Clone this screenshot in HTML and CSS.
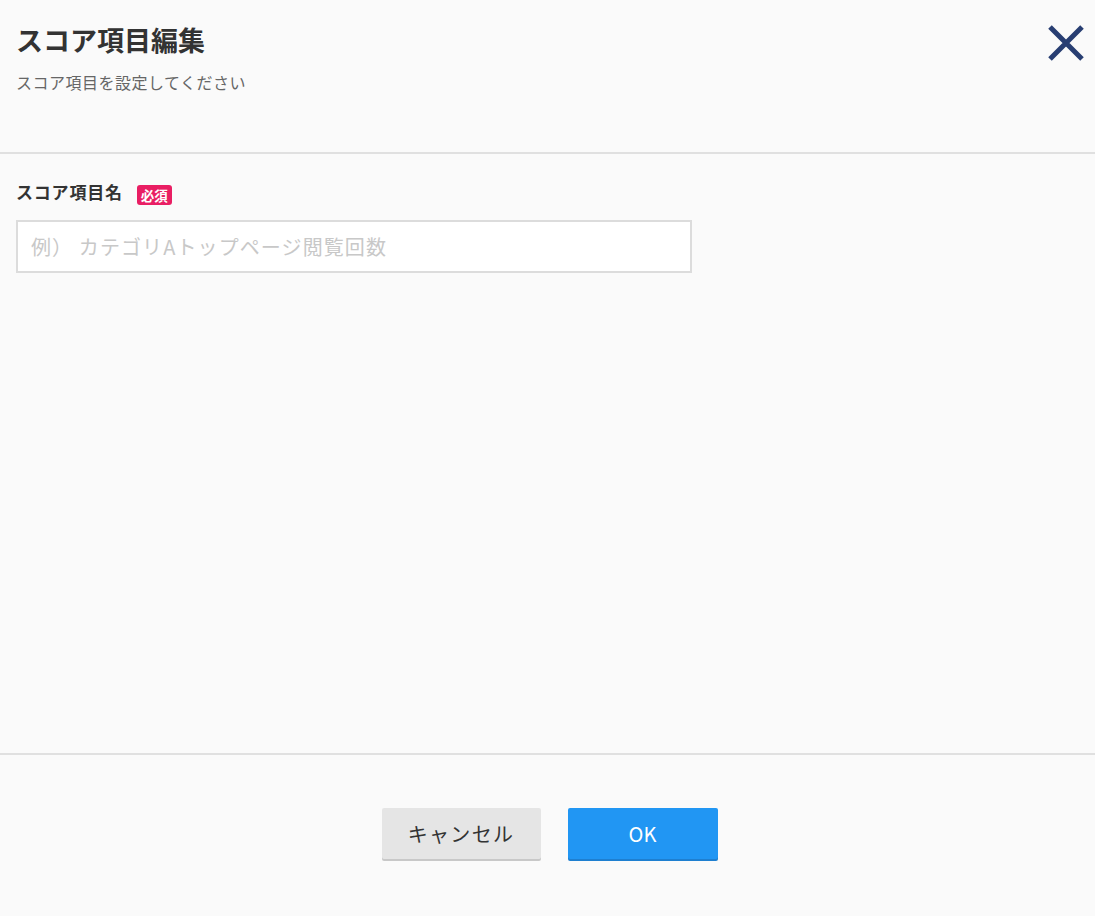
FILE: index.html
```html
<!DOCTYPE html>
<html lang="ja">
<head>
<meta charset="utf-8">
<title>スコア項目編集</title>
<link rel="stylesheet" href="styles.css">
</head>
<body>
<div class="dialog">
  <header class="dialog-header">
    <h1 class="dialog-title">スコア項目編集</h1>
    <p class="dialog-subtitle">スコア項目を設定してください</p>
    <button class="close-btn" aria-label="閉じる">
      <svg width="36" height="36" viewBox="0 0 36 36">
        <path d="M2 2 L34 34 M34 2 L2 34" stroke="#283e72" stroke-width="5" fill="none"/>
      </svg>
    </button>
  </header>
  <main class="dialog-body">
    <div class="field-label">
      <span class="label-text">スコア項目名</span>
      <span class="badge">必須</span>
    </div>
    <input class="text-input" type="text" placeholder="例） カテゴリAトップページ閲覧回数">
  </main>
  <footer class="dialog-footer">
    <button class="btn btn-cancel">キャンセル</button>
    <button class="btn btn-ok">OK</button>
  </footer>
</div>
</body>
</html>
```
FILE: styles.css
```css
* { box-sizing: border-box; }
html, body {
  margin: 0;
  padding: 0;
  background: #fafafa;
  font-family: "Noto Sans CJK JP", "Noto Sans", sans-serif;
  color: #333;
}
.dialog {
  height: 916px;
  display: flex;
  flex-direction: column;
}
.dialog-header {
  position: relative;
  padding: 22px 16px 0;
  height: 154px;
  flex: none;
  border-bottom: 2px solid #e0e0e0;
}
.dialog-title {
  margin: 0;
  font-size: 27px;
  line-height: 36px;
  font-weight: 700;
  color: #333;
}
.dialog-subtitle {
  margin: 12px 0 0;
  font-size: 16px;
  letter-spacing: 0.5px;
  line-height: 24px;
  color: #666;
}
.close-btn {
  position: absolute;
  top: 25px;
  right: 11px;
  padding: 0;
  border: 0;
  background: transparent;
  width: 36px;
  height: 36px;
  cursor: pointer;
}
.close-btn svg { display: block; }
.dialog-body {
  flex: 1;
  padding: 26px 16px 0;
  border-bottom: 2px solid #e0e0e0;
}
.field-label {
  display: flex;
  align-items: center;
  gap: 14px;
  height: 24px;
}
.label-text {
  font-size: 17px;
  letter-spacing: 0.8px;
  line-height: 24px;
  font-weight: 700;
  color: #333;
}
.badge {
  display: inline-block;
  background: #e91e63;
  color: #fff;
  font-size: 13.5px;
  font-weight: 700;
  line-height: 20px;
  height: 20px;
  padding: 0 4px;
  border-radius: 3px;
  margin-top: 5px;
}
.text-input {
  display: block;
  margin-top: 16px;
  width: 676px;
  height: 53px;
  border: 2px solid #dcdcdc;
  background: #fff;
  padding: 0 13px;
  font-family: inherit;
  font-size: 20px;
  letter-spacing: 1.1px;
  color: #333;
  outline: none;
}
.text-input::placeholder { color: #c8c8c8; }
.dialog-footer {
  height: 161px;
  flex: none;
  display: flex;
  justify-content: center;
  align-items: flex-start;
  gap: 27px;
  padding: 53px 0 0 4px;
}
.btn {
  height: 51px;
  border: 0;
  border-radius: 2px;
  font-family: inherit;
  font-size: 20px;
  cursor: pointer;
}
.btn-cancel {
  width: 159px;
  background: #e5e5e5;
  color: #333;
  letter-spacing: 1.3px;
  box-shadow: 0 2px 0 #c8c8c8;
}
.btn-ok {
  width: 150px;
  background: #2196f3;
  color: #fff;
  box-shadow: 0 2px 0 #1e7fd0;
}
```
